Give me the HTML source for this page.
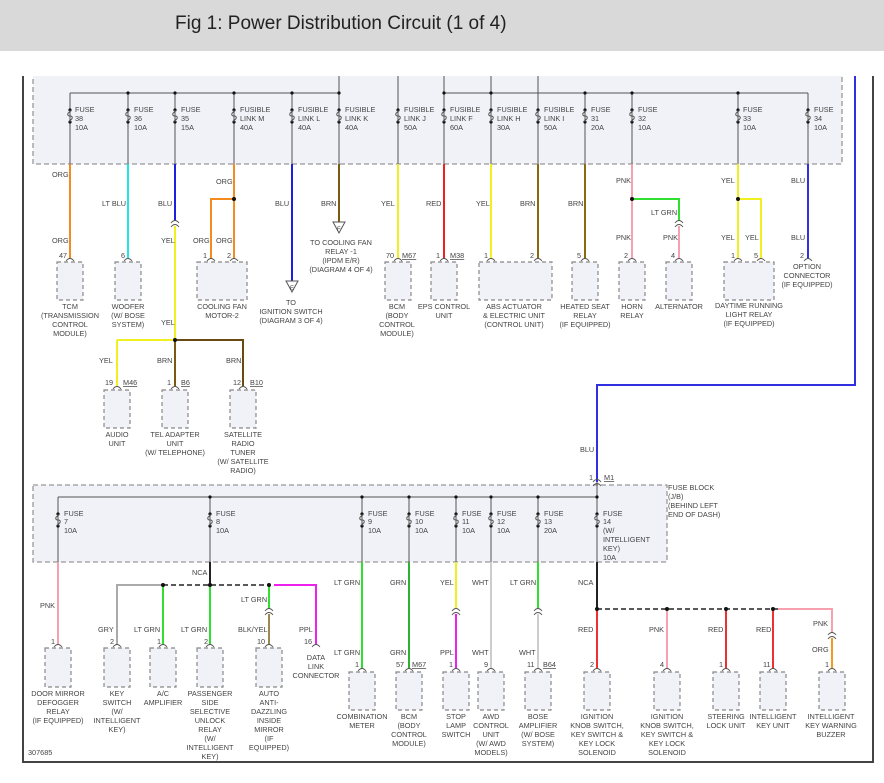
<!DOCTYPE html>
<html><head><meta charset="utf-8"><style>
body{margin:0;width:884px;height:778px;overflow:hidden;background:#fff}
svg text{font-family:"Liberation Sans",sans-serif;font-size:7.3px;fill:#444}
</style></head><body>
<svg width="884" height="778" viewBox="0 0 884 778">
<defs>
<g id="fz"><circle cx="0" cy="0" r="1.6" fill="#111"/><circle cx="0" cy="12" r="1.6" fill="#111"/><path d="M0,0 v2 c-3,1 -3,4 0,4 c3,0 3,3 0,4 v2" fill="none" stroke="#555" stroke-width="1"/></g>
<path id="pin" d="M-4,2 q4,-5 8,0" fill="none" stroke="#555" stroke-width="0.9"/>
<g id="cn"><path d="M-4,-2 q4,-5 8,0 M-4,2 q4,-5 8,0" fill="none" stroke="#555" stroke-width="0.9"/></g>
</defs>
<rect x="0" y="0" width="884" height="51" fill="#d9d9d9"/>
<text x="175" y="29" style="font-size:19px;fill:#222">Fig 1: Power Distribution Circuit (1 of 4)</text>
<path d="M23,76 V762 H873 V76" fill="none" stroke="#444" stroke-width="2"/>
<rect x="33" y="70" width="809" height="94" fill="#f1f1f8" stroke="#999" stroke-width="1.3" stroke-dasharray="5,3"/>
<rect x="30" y="52" width="820" height="24" fill="#fff"/>
<g stroke="#555" stroke-width="1" fill="none">
<path d="M70,93 H339 M444,93 H808 M339,76 V164 M398,76 V164 M444,76 V93 M491,76 V164 M538,76 V164"/>
<path d="M70,93 V164 M128,93 V164 M175,93 V164 M234,93 V164 M292,93 V164 M444,93 V164 M585,93 V164 M632,93 V164 M738,93 V164 M808,93 V164"/>
</g>
<g fill="#111"><circle cx="128" cy="93" r="1.6"/><circle cx="175" cy="93" r="1.6"/><circle cx="234" cy="93" r="1.6"/><circle cx="292" cy="93" r="1.6"/><circle cx="339" cy="93" r="1.6"/><circle cx="444" cy="93" r="1.6"/><circle cx="491" cy="93" r="1.6"/><circle cx="585" cy="93" r="1.6"/><circle cx="632" cy="93" r="1.6"/><circle cx="738" cy="93" r="1.6"/></g>
<g>
<use href="#fz" x="70" y="110"/><use href="#fz" x="128" y="110"/><use href="#fz" x="175" y="110"/><use href="#fz" x="234" y="110"/><use href="#fz" x="292" y="110"/><use href="#fz" x="339" y="110"/><use href="#fz" x="398" y="110"/><use href="#fz" x="444" y="110"/><use href="#fz" x="491" y="110"/><use href="#fz" x="538" y="110"/><use href="#fz" x="585" y="110"/><use href="#fz" x="632" y="110"/><use href="#fz" x="738" y="110"/><use href="#fz" x="808" y="110"/>
</g>
<g>
<text x="75" y="112">FUSE</text><text x="75" y="121">38</text><text x="75" y="130">10A</text>
<text x="134" y="112">FUSE</text><text x="134" y="121">36</text><text x="134" y="130">10A</text>
<text x="181" y="112">FUSE</text><text x="181" y="121">35</text><text x="181" y="130">15A</text>
<text x="240" y="112">FUSIBLE</text><text x="240" y="121">LINK M</text><text x="240" y="130">40A</text>
<text x="298" y="112">FUSIBLE</text><text x="298" y="121">LINK L</text><text x="298" y="130">40A</text>
<text x="345" y="112">FUSIBLE</text><text x="345" y="121">LINK K</text><text x="345" y="130">40A</text>
<text x="404" y="112">FUSIBLE</text><text x="404" y="121">LINK J</text><text x="404" y="130">50A</text>
<text x="450" y="112">FUSIBLE</text><text x="450" y="121">LINK F</text><text x="450" y="130">60A</text>
<text x="497" y="112">FUSIBLE</text><text x="497" y="121">LINK H</text><text x="497" y="130">30A</text>
<text x="544" y="112">FUSIBLE</text><text x="544" y="121">LINK I</text><text x="544" y="130">50A</text>
<text x="591" y="112">FUSE</text><text x="591" y="121">31</text><text x="591" y="130">20A</text>
<text x="638" y="112">FUSE</text><text x="638" y="121">32</text><text x="638" y="130">10A</text>
<text x="743" y="112">FUSE</text><text x="743" y="121">33</text><text x="743" y="130">10A</text>
<text x="814" y="112">FUSE</text><text x="814" y="121">34</text><text x="814" y="130">10A</text>
</g>
<g fill="none" stroke-width="2">
<path d="M70,164 V259" stroke="#f58a1f"/>
<path d="M128,164 V259" stroke="#22e6e6"/>
<path d="M175,164 V221" stroke="#1f1fe0"/>
<path d="M175,226 V340" stroke="#f0f020"/>
<path d="M234,164 V259 M234,199 H211 V259" stroke="#f58a1f"/>
<path d="M292,164 V281" stroke="#1f1fe0"/>
<path d="M339,164 V222" stroke="#7a5a10"/>
<path d="M398,164 V259" stroke="#f0f020"/>
<path d="M444,164 V259" stroke="#ee2020"/>
<path d="M491,164 V259" stroke="#f0f020"/>
<path d="M538,164 V259" stroke="#8a6a10"/>
<path d="M585,164 V259" stroke="#8a6a10"/>
<path d="M632,164 V259" stroke="#f7a0b0"/>
<path d="M632,199 H679 V221" stroke="#30e030"/>
<path d="M679,226 V259" stroke="#f7a0b0"/>
<path d="M738,164 V259 M738,199 H761 V259" stroke="#f0f020"/>
<path d="M808,164 V259" stroke="#3030e0"/>
<path d="M117,340 H175" stroke="#f0f020"/>
<path d="M117,340 V386" stroke="#f0f020"/>
<path d="M175,340 H243 V386" stroke="#6a4a10"/>
<path d="M175,340 V386" stroke="#7a5a10"/>
<path d="M855,76 V385 H597 V482" stroke="#3030e0"/>
</g>
<g fill="#111"><circle cx="234" cy="199" r="2"/><circle cx="632" cy="199" r="2"/><circle cx="738" cy="199" r="2"/><circle cx="175" cy="340" r="2"/></g>
<use href="#cn" x="175" y="225"/><use href="#cn" x="679" y="225"/>
<path d="M333,222 h12 l-6,11 z M286,281 h12 l-6,11 z" fill="#fff" stroke="#555"/>
<text x="337" y="231" style="font-size:6px">F</text><text x="290" y="290" style="font-size:6px">E</text>
<g fill="#f1f1f8" stroke="#888" stroke-width="1.2" stroke-dasharray="4,3">
<rect x="57" y="262" width="26" height="38"/><rect x="115" y="262" width="26" height="38"/><rect x="197" y="262" width="50" height="38"/>
<rect x="385" y="262" width="26" height="38"/><rect x="431" y="262" width="26" height="38"/><rect x="479" y="262" width="73" height="38"/>
<rect x="572" y="262" width="26" height="38"/><rect x="619" y="262" width="26" height="38"/><rect x="666" y="262" width="26" height="38"/><rect x="724" y="262" width="50" height="38"/>
<rect x="104" y="390" width="26" height="38"/><rect x="162" y="390" width="26" height="38"/><rect x="230" y="390" width="26" height="38"/>
</g>
<g><use href="#pin" x="70" y="259"/><use href="#pin" x="128" y="259"/><use href="#pin" x="211" y="259"/><use href="#pin" x="234" y="259"/><use href="#pin" x="398" y="259"/><use href="#pin" x="444" y="259"/><use href="#pin" x="491" y="259"/><use href="#pin" x="538" y="259"/><use href="#pin" x="585" y="259"/><use href="#pin" x="632" y="259"/><use href="#pin" x="679" y="259"/><use href="#pin" x="738" y="259"/><use href="#pin" x="761" y="259"/><use href="#pin" x="808" y="259"/><use href="#pin" x="117" y="387"/><use href="#pin" x="175" y="387"/><use href="#pin" x="243" y="387"/></g>
<g>
<text x="52" y="177">ORG</text><text x="52" y="243">ORG</text><text x="59" y="258">47</text>
<text x="102" y="206">LT BLU</text><text x="121" y="258">6</text>
<text x="158" y="206">BLU</text><text x="161" y="243">YEL</text><text x="161" y="325">YEL</text>
<text x="216" y="184">ORG</text><text x="193" y="243">ORG</text><text x="216" y="243">ORG</text><text x="203" y="258">1</text><text x="227" y="258">2</text>
<text x="275" y="206">BLU</text><text x="321" y="206">BRN</text>
<text x="381" y="206">YEL</text><text x="426" y="206">RED</text><text x="386" y="258">70</text><text x="402" y="258" style="text-decoration:underline">M67</text>
<text x="436" y="258">1</text><text x="450" y="258" style="text-decoration:underline">M38</text>
<text x="476" y="206">YEL</text><text x="520" y="206">BRN</text><text x="484" y="258">1</text><text x="530" y="258">2</text>
<text x="568" y="206">BRN</text><text x="577" y="258">5</text>
<text x="616" y="183">PNK</text><text x="616" y="240">PNK</text><text x="624" y="258">2</text>
<text x="651" y="215">LT GRN</text><text x="663" y="240">PNK</text><text x="671" y="258">4</text>
<text x="721" y="183">YEL</text><text x="721" y="240">YEL</text><text x="745" y="240">YEL</text><text x="731" y="258">1</text><text x="754" y="258">5</text>
<text x="791" y="183">BLU</text><text x="791" y="240">BLU</text><text x="800" y="258">2</text>
<text x="99" y="363">YEL</text><text x="157" y="363">BRN</text><text x="226" y="363">BRN</text>
<text x="105" y="385">19</text><text x="123" y="385" style="text-decoration:underline">M46</text>
<text x="167" y="385">1</text><text x="181" y="385" style="text-decoration:underline">B6</text>
<text x="233" y="385">12</text><text x="250" y="385" style="text-decoration:underline">B10</text>
</g>
<g text-anchor="middle">
<text x="70" y="309">TCM</text><text x="70" y="318">(TRANSMISSION</text><text x="70" y="327">CONTROL</text><text x="70" y="336">MODULE)</text>
<text x="128" y="309">WOOFER</text><text x="128" y="318">(W/ BOSE</text><text x="128" y="327">SYSTEM)</text>
<text x="222" y="309">COOLING FAN</text><text x="222" y="318">MOTOR-2</text>
<text x="341" y="245">TO COOLING FAN</text><text x="341" y="254">RELAY -1</text><text x="341" y="263">(IPDM E/R)</text><text x="341" y="272">(DIAGRAM 4 OF 4)</text>
<text x="291" y="305">TO</text><text x="291" y="314">IGNITION SWITCH</text><text x="291" y="323">(DIAGRAM 3 OF 4)</text>
<text x="397" y="309">BCM</text><text x="397" y="318">(BODY</text><text x="397" y="327">CONTROL</text><text x="397" y="336">MODULE)</text>
<text x="444" y="309">EPS CONTROL</text><text x="444" y="318">UNIT</text>
<text x="514" y="309">ABS ACTUATOR</text><text x="514" y="318">&amp; ELECTRIC UNIT</text><text x="514" y="327">(CONTROL UNIT)</text>
<text x="585" y="309">HEATED SEAT</text><text x="585" y="318">RELAY</text><text x="585" y="327">(IF EQUIPPED)</text>
<text x="632" y="309">HORN</text><text x="632" y="318">RELAY</text>
<text x="679" y="309">ALTERNATOR</text>
<text x="749" y="308">DAYTIME RUNNING</text><text x="749" y="317">LIGHT RELAY</text><text x="749" y="326">(IF EQUIPPED)</text>
<text x="807" y="269">OPTION</text><text x="807" y="278">CONNECTOR</text><text x="807" y="287">(IF EQUIPPED)</text>
<text x="117" y="437">AUDIO</text><text x="117" y="446">UNIT</text>
<text x="175" y="437">TEL ADAPTER</text><text x="175" y="446">UNIT</text><text x="175" y="455">(W/ TELEPHONE)</text>
<text x="243" y="437">SATELLITE</text><text x="243" y="446">RADIO</text><text x="243" y="455">TUNER</text><text x="243" y="464">(W/ SATELLITE</text><text x="243" y="473">RADIO)</text>
</g>
<rect x="33" y="485" width="634" height="77" fill="#f1f1f8" stroke="#999" stroke-width="1.3" stroke-dasharray="5,3"/>
<g stroke="#555" stroke-width="1" fill="none">
<path d="M58,497 H597 M58,497 V562 M210,497 V562 M362,497 V562 M409,497 V562 M456,497 V562 M491,497 V562 M538,497 V562 M597,482 V562"/>
</g>
<g fill="#111"><circle cx="210" cy="497" r="1.6"/><circle cx="362" cy="497" r="1.6"/><circle cx="409" cy="497" r="1.6"/><circle cx="456" cy="497" r="1.6"/><circle cx="491" cy="497" r="1.6"/><circle cx="538" cy="497" r="1.6"/><circle cx="597" cy="497" r="1.6"/></g>
<use href="#fz" x="58" y="514"/><use href="#fz" x="210" y="514"/><use href="#fz" x="362" y="514"/><use href="#fz" x="409" y="514"/><use href="#fz" x="456" y="514"/><use href="#fz" x="491" y="514"/><use href="#fz" x="538" y="514"/><use href="#fz" x="597" y="514"/>
<use href="#cn" x="597" y="484"/>
<g>
<text x="64" y="516">FUSE</text><text x="64" y="524">7</text><text x="64" y="533">10A</text>
<text x="216" y="516">FUSE</text><text x="216" y="524">8</text><text x="216" y="533">10A</text>
<text x="368" y="516">FUSE</text><text x="368" y="524">9</text><text x="368" y="533">10A</text>
<text x="415" y="516">FUSE</text><text x="415" y="524">10</text><text x="415" y="533">10A</text>
<text x="462" y="516">FUSE</text><text x="462" y="524">11</text><text x="462" y="533">10A</text>
<text x="497" y="516">FUSE</text><text x="497" y="524">12</text><text x="497" y="533">10A</text>
<text x="544" y="516">FUSE</text><text x="544" y="524">13</text><text x="544" y="533">20A</text>
<text x="603" y="516">FUSE</text><text x="603" y="524">14</text><text x="603" y="533">(W/</text><text x="603" y="542">INTELLIGENT</text><text x="603" y="551">KEY)</text><text x="603" y="560">10A</text>
<text x="668" y="490">FUSE BLOCK</text><text x="668" y="499">(J/B)</text><text x="668" y="508">(BEHIND LEFT</text><text x="668" y="517">END OF DASH)</text>
<text x="580" y="452">BLU</text><text x="589" y="480">1</text><text x="604" y="480" style="text-decoration:underline">M1</text>
</g>
<g fill="none" stroke-width="2">
<path d="M58,562 V645" stroke="#f7a0b0"/>
<path d="M210,562 V585" stroke="#222"/>
<path d="M163,585 H117 V645" stroke="#aaa"/>
<path d="M163,585 V645" stroke="#30e030"/>
<path d="M210,585 V645" stroke="#30e030"/>
<path d="M269,585 V609" stroke="#30e030"/>
<path d="M269,614 V645" stroke="#9a8a50"/>
<path d="M274,585 H316 V645" stroke="#ee20ee"/>
<path d="M362,562 V669" stroke="#30e030"/>
<path d="M409,562 V669" stroke="#30b030"/>
<path d="M456,562 V609" stroke="#f0f020"/><path d="M456,614 V669" stroke="#ee20ee"/>
<path d="M491,562 V669" stroke="#ccc"/>
<path d="M538,562 V609" stroke="#30e030"/><path d="M538,614 V669" stroke="#ccc"/>
<path d="M597,562 V609" stroke="#222"/>
<path d="M597,609 V669 M726,609 V669 M773,609 V669" stroke="#ee3030"/>
<path d="M667,609 V669" stroke="#f7a0b0"/>
<path d="M778,609 H832 V633" stroke="#f7a0b0"/>
<path d="M832,638 V669" stroke="#f59a20"/>
</g>
<path d="M163,585 H269 M597,609 H778" stroke="#222" stroke-width="1.4" stroke-dasharray="5,3" fill="none"/>
<g fill="#111"><circle cx="163" cy="585" r="2"/><circle cx="210" cy="585" r="2"/><circle cx="269" cy="585" r="2"/><circle cx="597" cy="609" r="2"/><circle cx="667" cy="609" r="2"/><circle cx="726" cy="609" r="2"/><circle cx="773" cy="609" r="2"/></g>
<use href="#cn" x="269" y="613"/><use href="#cn" x="456" y="613"/><use href="#cn" x="538" y="613"/><use href="#cn" x="832" y="637"/>
<g fill="#f1f1f8" stroke="#888" stroke-width="1.2" stroke-dasharray="4,3">
<rect x="45" y="648" width="26" height="39"/><rect x="104" y="648" width="26" height="39"/><rect x="150" y="648" width="26" height="39"/><rect x="197" y="648" width="26" height="39"/><rect x="256" y="648" width="26" height="39"/>
<rect x="349" y="672" width="26" height="38"/><rect x="396" y="672" width="26" height="38"/><rect x="443" y="672" width="26" height="38"/><rect x="478" y="672" width="26" height="38"/><rect x="525" y="672" width="26" height="38"/><rect x="584" y="672" width="26" height="38"/><rect x="654" y="672" width="26" height="38"/><rect x="713" y="672" width="26" height="38"/><rect x="760" y="672" width="26" height="38"/><rect x="819" y="672" width="26" height="38"/>
</g>
<g><use href="#pin" x="58" y="645"/><use href="#pin" x="117" y="645"/><use href="#pin" x="163" y="645"/><use href="#pin" x="210" y="645"/><use href="#pin" x="269" y="645"/><use href="#pin" x="316" y="645"/>
<use href="#pin" x="362" y="669"/><use href="#pin" x="409" y="669"/><use href="#pin" x="456" y="669"/><use href="#pin" x="491" y="669"/><use href="#pin" x="538" y="669"/><use href="#pin" x="597" y="669"/><use href="#pin" x="667" y="669"/><use href="#pin" x="726" y="669"/><use href="#pin" x="773" y="669"/><use href="#pin" x="832" y="669"/></g>
<g>
<text x="40" y="608">PNK</text><text x="192" y="575">NCA</text>
<text x="98" y="632">GRY</text><text x="134" y="632">LT GRN</text><text x="181" y="632">LT GRN</text><text x="241" y="602">LT GRN</text><text x="238" y="632">BLK/YEL</text><text x="299" y="632">PPL</text>
<text x="51" y="644">1</text><text x="110" y="644">2</text><text x="157" y="644">1</text><text x="204" y="644">2</text><text x="257" y="644">10</text><text x="304" y="644">16</text>
<text x="334" y="585">LT GRN</text><text x="390" y="585">GRN</text><text x="440" y="585">YEL</text><text x="472" y="585">WHT</text><text x="510" y="585">LT GRN</text><text x="578" y="585">NCA</text>
<text x="334" y="655">LT GRN</text><text x="390" y="655">GRN</text><text x="440" y="655">PPL</text><text x="472" y="655">WHT</text><text x="519" y="655">WHT</text>
<text x="578" y="632">RED</text><text x="649" y="632">PNK</text><text x="708" y="632">RED</text><text x="756" y="632">RED</text><text x="813" y="626">PNK</text><text x="812" y="652">ORG</text>
<text x="355" y="667">1</text><text x="396" y="667">57</text><text x="412" y="667" style="text-decoration:underline">M67</text><text x="449" y="667">1</text><text x="484" y="667">9</text><text x="527" y="667">11</text><text x="543" y="667" style="text-decoration:underline">B64</text>
<text x="590" y="667">2</text><text x="660" y="667">4</text><text x="719" y="667">1</text><text x="763" y="667">11</text><text x="825" y="667">1</text>
<text x="28" y="755">307685</text>
</g>
<g text-anchor="middle">
<text x="58" y="696">DOOR MIRROR</text><text x="58" y="705">DEFOGGER</text><text x="58" y="714">RELAY</text><text x="58" y="723">(IF EQUIPPED)</text>
<text x="117" y="696">KEY</text><text x="117" y="705">SWITCH</text><text x="117" y="714">(W/</text><text x="117" y="723">INTELLIGENT</text><text x="117" y="732">KEY)</text>
<text x="163" y="696">A/C</text><text x="163" y="705">AMPLIFIER</text>
<text x="210" y="696">PASSENGER</text><text x="210" y="705">SIDE</text><text x="210" y="714">SELECTIVE</text><text x="210" y="723">UNLOCK</text><text x="210" y="732">RELAY</text><text x="210" y="741">(W/</text><text x="210" y="750">INTELLIGENT</text><text x="210" y="759">KEY)</text>
<text x="269" y="696">AUTO</text><text x="269" y="705">ANTI-</text><text x="269" y="714">DAZZLING</text><text x="269" y="723">INSIDE</text><text x="269" y="732">MIRROR</text><text x="269" y="741">(IF</text><text x="269" y="750">EQUIPPED)</text>
<text x="316" y="660">DATA</text><text x="316" y="669">LINK</text><text x="316" y="678">CONNECTOR</text>
<text x="362" y="719">COMBINATION</text><text x="362" y="728">METER</text>
<text x="409" y="719">BCM</text><text x="409" y="728">(BODY</text><text x="409" y="737">CONTROL</text><text x="409" y="746">MODULE)</text>
<text x="456" y="719">STOP</text><text x="456" y="728">LAMP</text><text x="456" y="737">SWITCH</text>
<text x="491" y="719">AWD</text><text x="491" y="728">CONTROL</text><text x="491" y="737">UNIT</text><text x="491" y="746">(W/ AWD</text><text x="491" y="755">MODELS)</text>
<text x="538" y="719">BOSE</text><text x="538" y="728">AMPLIFIER</text><text x="538" y="737">(W/ BOSE</text><text x="538" y="746">SYSTEM)</text>
<text x="597" y="719">IGNITION</text><text x="597" y="728">KNOB SWITCH,</text><text x="597" y="737">KEY SWITCH &amp;</text><text x="597" y="746">KEY LOCK</text><text x="597" y="755">SOLENOID</text>
<text x="667" y="719">IGNITION</text><text x="667" y="728">KNOB SWITCH,</text><text x="667" y="737">KEY SWITCH &amp;</text><text x="667" y="746">KEY LOCK</text><text x="667" y="755">SOLENOID</text>
<text x="726" y="719">STEERING</text><text x="726" y="728">LOCK UNIT</text>
<text x="773" y="719">INTELLIGENT</text><text x="773" y="728">KEY UNIT</text>
<text x="831" y="719">INTELLIGENT</text><text x="831" y="728">KEY WARNING</text><text x="831" y="737">BUZZER</text>
</g>
</svg>
</body></html>
